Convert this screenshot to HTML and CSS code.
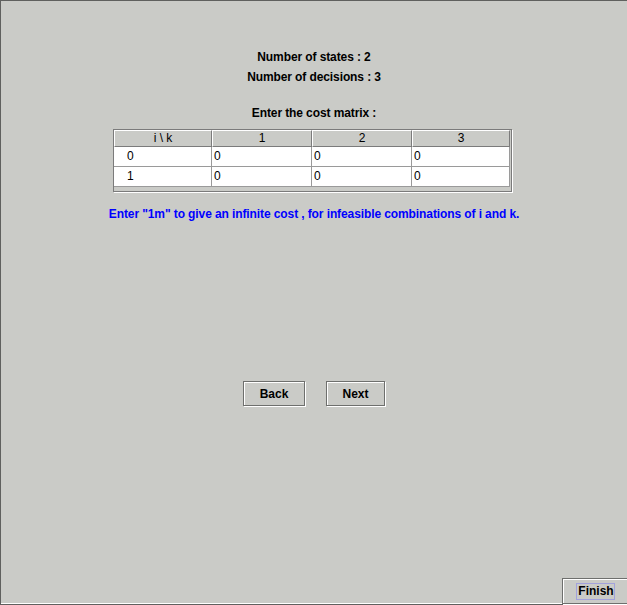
FILE: index.html
```html
<!DOCTYPE html>
<html>
<head>
<meta charset="utf-8">
<link rel="stylesheet" href="styles.css">
</head>
<body>
<div class="window">
  <div class="content">
    <div class="info">
      <div class="line">Number of states : 2</div>
      <div class="line">Number of decisions : 3</div>
      <div class="line prompt">Enter the cost matrix :</div>
    </div>
    <div class="scrollpane">
      <div class="grid">
        <div class="hcell">i \ k</div>
        <div class="hcell">1</div>
        <div class="hcell">2</div>
        <div class="hcell">3</div>
        <div class="cell first">0</div>
        <div class="cell">0</div>
        <div class="cell">0</div>
        <div class="cell">0</div>
        <div class="cell first">1</div>
        <div class="cell">0</div>
        <div class="cell">0</div>
        <div class="cell">0</div>
      </div>
    </div>
    <div class="note">Enter "1m" to give an infinite cost , for infeasible combinations of i and k.</div>
    <div class="nav">
      <div class="btn back">Back</div>
      <div class="btn next">Next</div>
    </div>
  </div>
  <div class="footer">
    <div class="btn finish"><span class="focus">Finish</span></div>
  </div>
</div>
</body>
</html>
```
FILE: styles.css
```css
html, body {
  margin: 0;
  padding: 0;
}
body {
  width: 627px;
  height: 605px;
  overflow: hidden;
  background: #cacbc7;
  font-family: "Liberation Sans", Arial, sans-serif;
}
.window {
  box-sizing: border-box;
  width: 627px;
  height: 605px;
  border-top: 1px solid #5f605e;
  border-left: 1px solid #5f605e;
  border-bottom: 1px solid #5f605e;
  box-shadow: inset 0 -1px 0 #ffffff;
  display: flex;
  flex-direction: column;
}
.content {
  flex: 1;
  display: flex;
  flex-direction: column;
  align-items: center;
}
.info {
  padding-top: 46px;
  display: flex;
  flex-direction: column;
  align-items: center;
}
.line {
  font-weight: bold;
  font-size: 12px;
  line-height: 20px;
  color: #000;
  letter-spacing: -0.1px;
}
.prompt {
  margin-top: 16px;
}
.scrollpane {
  margin-top: 6px;
  box-sizing: border-box;
  width: 399px;
  height: 63px;
  border: 1px solid #7b7b7b;
  box-shadow: 1px 1px 0 #ffffff;
  background: #cacbc7;
  margin-right: 3px;
}
.grid {
  display: grid;
  grid-template-columns: 98px 100px 100px 98px;
  grid-template-rows: 17px 20px 20px;
}
.hcell {
  box-sizing: border-box;
  background: #cacbc7;
  border-top: 1px solid #ffffff;
  border-left: 1px solid #ffffff;
  border-right: 1px solid #7b7b7b;
  border-bottom: 1px solid #7b7b7b;
  font-size: 12px;
  line-height: 15px;
  text-align: center;
  color: #000;
}
.cell {
  box-sizing: border-box;
  background: #ffffff;
  border-right: 1px solid #9a9a9a;
  border-bottom: 1px solid #9a9a9a;
  font-size: 12px;
  line-height: 19px;
  padding-left: 2px;
  color: #000;
}
.cell.first {
  padding-left: 13px;
}
.note {
  margin-top: 12px;
  font-weight: bold;
  font-size: 12px;
  line-height: 20px;
  color: #0000ff;
  letter-spacing: -0.1px;
}
.nav {
  margin-top: 157px;
  display: flex;
  gap: 21px;
}
.btn {
  box-sizing: border-box;
  height: 25px;
  padding-top: 1px;
  border: 1px solid #6e6f6d;
  box-shadow: 1px 1px 0 #ffffff, inset 1px 1px 0 #ffffff;
  display: flex;
  align-items: center;
  justify-content: center;
  font-weight: bold;
  font-size: 12px;
  color: #000;
  background: #cacbc7;
}
.back {
  width: 62px;
}
.next {
  width: 59px;
}
.footer {
  display: flex;
  justify-content: flex-end;
  margin-right: -2px;
}
.finish {
  width: 67px;
  height: 26px;
}
.focus {
  border: 1px solid #a2a2dc;
  padding: 1px 0 1px 1px;
  line-height: 13px;
}
```
